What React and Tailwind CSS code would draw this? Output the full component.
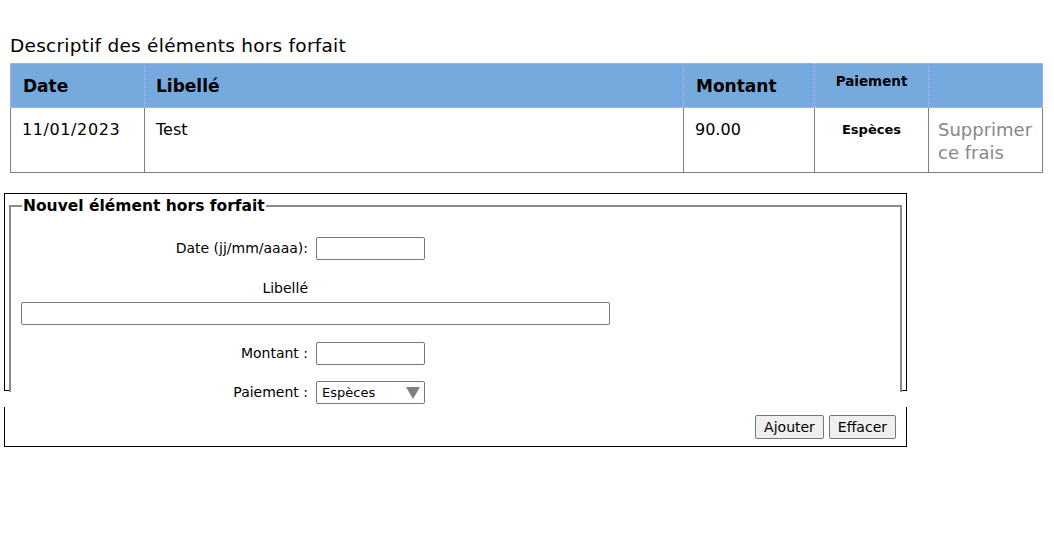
import React from 'react';

function FormRow({ label, children }) {
  return (
    <div className="flex items-center">
      <label className="w-[294px] text-right text-[14px] pr-[8px]">{label}</label>
      {children}
    </div>
  );
}

const th = 'border-l border-t border-b [border-style:dotted] border-[#c6dc2a]';
const td = 'border-l border-b border-[#808080]';

export default function App() {
  return (
    <div className="w-[1054px] h-[537px] bg-white text-black font-['DejaVu_Sans',Verdana,sans-serif]">
      <div className="pt-[35px] pl-[10px]">
        <h2 className="text-[18.5px] leading-[22px] tracking-[0.25px] mb-[6px]">Descriptif des éléments hors forfait</h2>
        <table className="w-[1033px] border-separate border-spacing-0 table-fixed">
          <thead>
            <tr className="bg-[#77aadc] h-[45px]">
              <th className={`w-[134px] align-top text-left pl-[12px] pt-[10px] text-[17px] font-bold ${th}`}>Date</th>
              <th className={`w-[539px] align-top text-left pl-[11px] pt-[10px] text-[17px] font-bold ${th}`}>Libellé</th>
              <th className={`w-[131px] align-top text-left pl-[12px] pt-[10px] text-[17px] font-bold ${th}`}>Montant</th>
              <th className={`w-[114px] align-top text-center pt-[7px] text-[13.5px] font-bold ${th}`}>Paiement</th>
              <th className={`w-[115px] border-r ${th}`}></th>
            </tr>
          </thead>
          <tbody>
            <tr className="h-[65px]">
              <td className={`align-top pl-[11px] pt-[10px] text-[16px] tracking-[0.6px] ${td}`}>11/01/2023</td>
              <td className={`align-top pl-[11px] pt-[10px] text-[16px] ${td}`}>Test</td>
              <td className={`align-top pl-[11px] pt-[10px] text-[16px] ${td}`}>90.00</td>
              <td className={`align-top text-center pt-[12px] text-[13px] font-bold ${td}`}>Espèces</td>
              <td className={`align-top pl-[9px] pt-[10px] text-[18px] leading-[23px] text-[#888888] border-r ${td}`}>Supprimer ce frais</td>
            </tr>
          </tbody>
        </table>
      </div>

      <div className="ml-[4px] mt-[20px] w-[903px]">
        {/* top part: fieldset covers the bottom border except at the corners */}
        <div className="h-[198px] border border-black pt-[2px] px-[4px]">
          <fieldset className="h-[196px] bg-white border-2 border-b-0 border-t-[#8a8a8a] border-l-[#8a8a8a] border-r-[#8a8a8a] px-[11px] pt-[4px]">
            <legend className="text-[15.5px] font-bold px-[1px] leading-[20px]">Nouvel élément hors forfait</legend>
            <div className="flex flex-col text-[14px]">
              <div className="mt-[17px]">
                <FormRow label="Date (jj/mm/aaaa):">
                  <input type="text" className="w-[109px] h-[23px] border border-[#767676] rounded-[2px]" />
                </FormRow>
              </div>
              <div className="w-[286px] text-right mt-[19px] leading-[18px]">Libellé</div>
              <input type="text" className="w-[589px] h-[23px] border border-[#767676] rounded-[2px] mt-[5px] -ml-[1px]" />
              <div className="mt-[17px]">
                <FormRow label="Montant :">
                  <input type="text" className="w-[109px] h-[23px] border border-[#767676] rounded-[2px]" />
                </FormRow>
              </div>
              <div className="mt-[16px]">
                <FormRow label="Paiement :">
                  <div className="relative w-[109px] h-[23px] border border-[#767676] rounded-[2px] bg-white flex items-center pl-[5px] text-[13px]">
                    Espèces
                    <svg className="absolute right-[4px] top-[5px]" width="14" height="12" viewBox="0 0 14 12">
                      <path d="M0 0 H14 L7 12 Z" fill="#808080" />
                    </svg>
                  </div>
                </FormRow>
              </div>
            </div>
          </fieldset>
        </div>
        <div className="mt-[16px] h-[40px] border-l border-r border-b border-black flex items-start justify-end gap-[5px] pt-[8px] pr-[10px]">
          <button className="h-[24px] px-[8px] bg-[#efefef] border border-[#767676] rounded-[2px] text-[14px]">Ajouter</button>
          <button className="h-[24px] px-[8px] bg-[#efefef] border border-[#767676] rounded-[2px] text-[14px]">Effacer</button>
        </div>
      </div>
    </div>
  );
}
